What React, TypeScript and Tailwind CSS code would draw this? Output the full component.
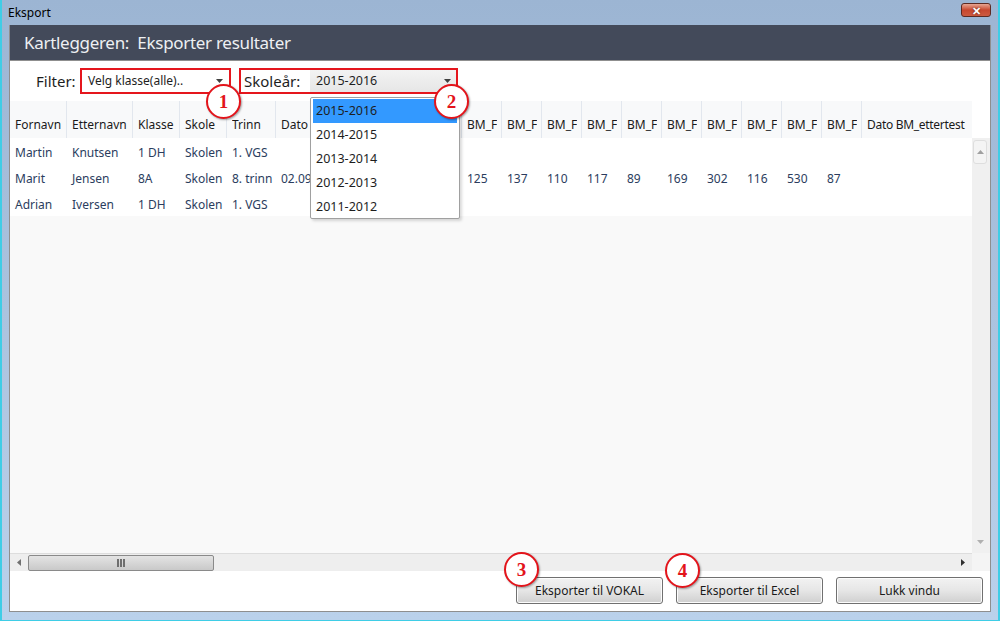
import React from 'react';

const FONT = { fontFamily: '"Noto Sans", "Open Sans", sans-serif' };

type Col = { h: string; w: number };

const cols: Col[] = [
  { h: 'Fornavn', w: 57 },
  { h: 'Etternavn', w: 66 },
  { h: 'Klasse', w: 47 },
  { h: 'Skole', w: 47 },
  { h: 'Trinn', w: 49 },
  { h: 'Dato BM_førtest', w: 110 },
  { h: 'BM_Fonologi', w: 38 },
  { h: 'BM_Fonologi', w: 38 },
  { h: 'BM_Førtest1', w: 40 },
  { h: 'BM_Førtest2', w: 40 },
  { h: 'BM_Førtest3', w: 40 },
  { h: 'BM_Førtest4', w: 40 },
  { h: 'BM_Førtest5', w: 40 },
  { h: 'BM_Førtest6', w: 40 },
  { h: 'BM_Førtest7', w: 40 },
  { h: 'BM_Førtest8', w: 40 },
  { h: 'BM_Førtest9', w: 40 },
  { h: 'BM_Førtest10', w: 40 },
  { h: 'Dato BM_ettertest', w: 110 },
];

const rows: string[][] = [
  ['Martin', 'Knutsen', '1 DH', 'Skolen', '1. VGS'],
  ['Marit', 'Jensen', '8A', 'Skolen', '8. trinn', '02.09.2015', '', '', '125', '137', '110', '117', '89', '169', '302', '116', '530', '87'],
  ['Adrian', 'Iversen', '1 DH', 'Skolen', '1. VGS'],
];

const years = ['2015-2016', '2014-2015', '2013-2014', '2012-2013', '2011-2012'];

function Arrow() {
  return (
    <svg width="7" height="4" viewBox="0 0 7 4">
      <polygon points="0,0 7,0 3.5,4" fill="#404040" />
    </svg>
  );
}

// numbered red callout circle, centre given in page pixels
function Marker({ n, x, y }: { n: string; x: number; y: number }) {
  return (
    <div
      className="absolute w-[35px] h-[35px] rounded-full border-2 border-[#e3141b] bg-white flex items-center justify-center shadow-[1px_1px_2px_rgba(0,0,0,0.35)]"
      style={{ left: x - 19, top: y - 17 }}
    >
      <span className="text-[19px] font-bold text-[#e3141b] leading-none" style={{ fontFamily: '"Liberation Serif", serif' }}>
        {n}
      </span>
    </div>
  );
}

function Button({ label }: { label: string }) {
  return (
    <button className="w-[147px] h-[27px] rounded-[3px] border border-[#707070] bg-gradient-to-b from-[#f2f2f2] via-[#e6e6e6] to-[#cfcfcf] text-[12px] text-[#1a1a1a] shadow-[inset_0_0_0_1px_#fcfcfc]">
      {label}
    </button>
  );
}

export default function App() {
  return (
    <div
      className="relative w-[1000px] h-[621px] overflow-hidden bg-gradient-to-b from-[#9cb5d3] to-[#bad1eb] border-l-2 border-r-2 border-b border-[#3fcde6] flex flex-col"
      style={FONT}
    >
      {/* title bar */}
      <div className="h-[25px] shrink-0 relative flex items-center pl-[6px]">
        <span className="text-[12px] text-black">Eksport</span>
        <div className="absolute left-[959px] top-[3px] w-[30px] h-[14px] rounded-[3px] border border-[#5d2a22] bg-gradient-to-b from-[#e6a593] via-[#c7472f] to-[#cc5a40] flex items-center justify-center">
          <span className="text-white text-[11px] font-bold leading-none" style={{ textShadow: '0 0 2px #5a1a10' }}>
            ✕
          </span>
        </div>
      </div>

      {/* client area */}
      <div className="ml-[7px] w-[982px] h-[587px] shrink-0 bg-white border-l border-r border-b border-[#8e8e8e] flex flex-col">
        <div className="h-[35px] bg-[#434a5a] flex items-center pl-[14px] border-b border-[#8f8f8f] box-content">
          <span className="text-[17px] text-[#eef0f3] tracking-[-0.3px]">Kartleggeren:&nbsp; Eksporter resultater</span>
        </div>

        {/* filter row */}
        <div className="h-[40px] flex items-center">
          <span className="ml-[26px] text-[15px] text-[#1e1e1e] w-[44px]">Filter:</span>
          <div className="w-[151px] h-[26px] border-2 border-[#e5161d] flex items-center justify-between pl-[6px] pr-[6px] bg-white">
            <span className="text-[12px] text-[#1e1e1e]">Velg klasse(alle)..</span>
            <Arrow />
          </div>
          <div className="ml-[8px] w-[219px] h-[26px] border-2 border-[#e5161d] flex items-center">
            <span className="pl-[3px] text-[15px] text-[#1e1e1e] w-[69px]">Skoleår:</span>
            <div className="flex-1 h-[22px] bg-gradient-to-b from-[#f3f3f3] to-[#e6e6e6] flex items-center justify-between pl-[6px] pr-[5px]">
              <span className="text-[12.5px] text-[#1e1e1e]">2015-2016</span>
              <Arrow />
            </div>
          </div>
        </div>

        {/* grid */}
        <div className="h-[452px] flex">
          <div className="w-[962px] flex flex-col bg-[#f9f9f9]">
            <div className="h-[37px] flex bg-[#f8f9fa]">
              {cols.map((c, i) => (
                <div
                  key={i}
                  className={`h-full shrink-0 flex items-end pb-[5px] pl-[5px] pr-[4px] ${i < cols.length - 1 ? 'border-r border-[#e2e7ee]' : ''}`}
                  style={{ width: c.w }}
                >
                  <span className={`block min-w-0 flex-1 overflow-hidden whitespace-nowrap text-[12px] text-[#1a1a1a] leading-[16px] ${i === cols.length - 1 ? 'tracking-[-0.3px]' : ''}`}>
                    {c.h}
                  </span>
                </div>
              ))}
            </div>
            <div className="bg-white">
              {rows.map((r, ri) => (
                <div key={ri} className="h-[26px] flex items-center">
                  {cols.map((c, i) => (
                    <div key={i} className="shrink-0 pl-[5px] overflow-hidden whitespace-nowrap" style={{ width: c.w }}>
                      <span className="text-[12px] text-[#2b3d5e]">{r[i] ?? ''}</span>
                    </div>
                  ))}
                </div>
              ))}
            </div>
          </div>
          <div className="w-[18px] flex flex-col">
            <div className="h-[37px] bg-white" />
            <div className="flex-1 bg-[#f0f0f0] flex flex-col justify-between pt-[2px] pb-[1px] pr-[2px]">
              <div className="h-[24px] mx-[1px] rounded-[3px] border border-[#dedede] bg-[#f4f4f4] flex items-center justify-center">
                <svg width="7" height="4" viewBox="0 0 7 4">
                  <polygon points="0,4 7,4 3.5,0" fill="#a0a0a0" />
                </svg>
              </div>
              <div className="h-[20px] mx-[1px] flex items-center justify-center">
                <svg width="7" height="4" viewBox="0 0 7 4">
                  <polygon points="0,0 7,0 3.5,4" fill="#b0b0b0" />
                </svg>
              </div>
            </div>
          </div>
        </div>

        {/* horizontal scrollbar */}
        <div className="h-[18px] flex">
          <div className="w-[962px] bg-[#eeeeee] border-t border-[#dddddd] flex items-center">
            <div className="w-[18px] flex items-center justify-center">
              <svg width="4" height="7" viewBox="0 0 4 7">
                <polygon points="4,0 4,7 0,3.5" fill="#707070" />
              </svg>
            </div>
            <div className="w-[186px] h-[16px] rounded-[2px] border border-[#8a8a8a] bg-gradient-to-b from-[#e4e4e4] to-[#c9c9c9] flex items-center justify-center">
              <div className="flex gap-[1px]">
                <div className="w-[2px] h-[8px] bg-[#6e6e6e]" />
                <div className="w-[2px] h-[8px] bg-[#6e6e6e]" />
                <div className="w-[2px] h-[8px] bg-[#6e6e6e]" />
              </div>
            </div>
            <div className="flex-1" />
            <div className="w-[18px] flex items-center justify-center">
              <svg width="4" height="7" viewBox="0 0 4 7">
                <polygon points="0,0 0,7 4,3.5" fill="#303030" />
              </svg>
            </div>
          </div>
          <div className="w-[18px] bg-[#f4f4f4]" />
        </div>

        {/* footer */}
        <div className="h-[40px] flex justify-end gap-[13px] pr-[7px] pt-[6px]">
          <Button label="Eksporter til VOKAL" />
          <Button label="Eksporter til Excel" />
          <Button label="Lukk vindu" />
        </div>
      </div>

      {/* dropdown list */}
      <div className="absolute left-[308px] top-[97px] w-[150px] h-[122px] bg-white border border-[#a0a0a0] rounded-[2px] shadow-[2px_2px_3px_rgba(0,0,0,0.15)] px-[2px] pt-[1px]">
        {years.map((y, i) => (
          <div key={y} className={`h-[24px] flex items-center pl-[3px] ${i === 0 ? 'bg-[#3399ff]' : ''}`}>
            <span className="text-[12.5px] text-[#1e1e1e]">{y}</span>
          </div>
        ))}
      </div>

      <Marker n="1" x={223} y={101} />
      <Marker n="2" x={451} y={101} />
      <Marker n="3" x={521} y={569} />
      <Marker n="4" x={682} y={570} />
    </div>
  );
}
